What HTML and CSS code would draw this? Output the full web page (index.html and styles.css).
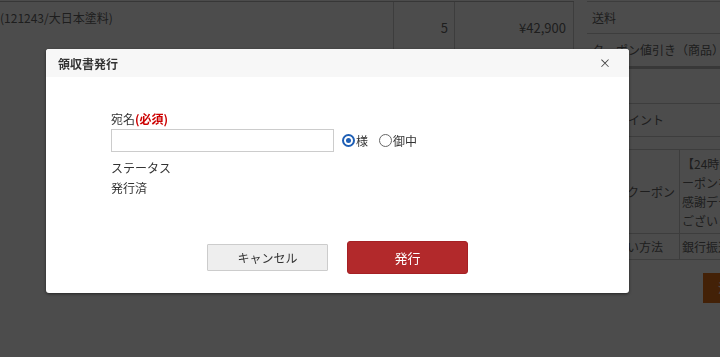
FILE: index.html
```html
<!DOCTYPE html>
<html lang="ja">
<head>
<meta charset="utf-8">
<title>領収書発行</title>
<link rel="stylesheet" href="styles.css">
</head>
<body>
<div class="page">
  <div class="items">
    <div class="item-row">
      <div class="c-name">(121243/大日本塗料)</div>
      <div class="c-qty">5</div>
      <div class="c-price">¥42,900</div>
    </div>
  </div>
  <div class="summary">
    <div class="sum-table">
      <div class="sum-row">送料</div>
      <div class="sum-row thick">クーポン値引き（商品）</div>
      <div class="sum-row">小計</div>
      <div class="sum-row">使用ポイント</div>
    </div>
    <div class="info-table">
      <div class="info-row tall">
        <div class="info-label">ご利用クーポン</div>
        <div class="info-value">【24時間限定】ク<br>ーポンをご利用いただき<br>感謝デーキャンペーン<br>ございます</div>
      </div>
      <div class="info-row">
        <div class="info-label">お支払い方法</div>
        <div class="info-value">銀行振込</div>
      </div>
    </div>
    <div class="order-wrap"><span class="order-btn">注文を確定する</span></div>
  </div>
</div>

<div class="overlay"></div>

<div class="modal">
  <div class="modal-head">
    <span class="modal-title">領収書発行</span>
    <span class="modal-close">×</span>
  </div>
  <div class="modal-body">
    <div class="field-label">宛名<span class="req">(必須)</span></div>
    <div class="field-row">
      <input class="name-input" type="text">
      <label class="radio"><span class="radio-dot checked"></span>様</label>
      <label class="radio"><span class="radio-dot"></span>御中</label>
    </div>
    <div class="status-label">ステータス</div>
    <div class="status-value">発行済</div>
    <div class="actions">
      <button class="btn-cancel">キャンセル</button>
      <button class="btn-issue">発行</button>
    </div>
  </div>
</div>
</body>
</html>
```

FILE: styles.css
```css
html, body {
  margin: 0;
  padding: 0;
  width: 720px;
  height: 357px;
  overflow: hidden;
  background: #ffffff;
  font-family: "Noto Sans CJK JP", "Noto Sans", sans-serif;
  color: #666666;
  font-size: 12px;
}

.page {
  display: flex;
  width: 760px;
  padding-top: 1px;
}

.items {
  width: 574px;
  flex: none;
}

.item-row {
  display: flex;
  height: 50px;
  border-top: 1px solid #b8b8b8;
}

.c-name {
  width: 394px;
  border-right: 1px solid #cccccc;
  line-height: 18px;
  padding-top: 7px;
  box-sizing: border-box;
}

.c-qty, .c-price {
  display: flex;
  align-items: center;
  justify-content: flex-end;
  font-size: 13px;
  box-sizing: border-box;
  padding-top: 1px;
}

.c-qty {
  width: 61px;
  border-right: 1px solid #cccccc;
  padding-right: 6px;
}

.c-price {
  width: 119px;
  border-right: 1px solid #cccccc;
  padding-right: 7px;
}

.summary {
  margin-left: 13px;
  width: 180px;
  flex: none;
}

.sum-table {
  border-top: 1px solid #cccccc;
}

.sum-row {
  height: 32px;
  line-height: 31px;
  padding-left: 5px;
  border-bottom: 1px solid #cccccc;
  white-space: nowrap;
  box-sizing: border-box;
}

.sum-row.thick {
  height: 35px;
  border-bottom: 3px solid #bbbbbb;
}

.sum-row:nth-child(3) {
  height: 35px;
}

.sum-row:nth-child(4) {
  height: 33px;
}

.info-table {
  margin-top: 12px;
  border-top: 1px solid #cccccc;
}

.info-row {
  display: flex;
  border-bottom: 1px solid #cccccc;
  height: 26px;
  box-sizing: border-box;
}

.info-row.tall {
  height: 84px;
}

.info-label {
  width: 93px;
  flex: none;
  padding-left: 4px;
  box-sizing: border-box;
  border-right: 1px solid #cccccc;
  display: flex;
  align-items: center;
  white-space: nowrap;
  overflow: hidden;
}

.info-value {
  padding-left: 2px;
  display: flex;
  align-items: center;
  line-height: 19px;
  white-space: nowrap;
}

.order-wrap {
  display: flex;
  margin-top: 13px;
  width: 180px;
}

.order-btn {
  display: block;
  width: 64px;
  height: 30px;
  line-height: 30px;
  background: #e0701a;
  color: #ffffff;
  padding-left: 15px;
  white-space: nowrap;
  overflow: hidden;
  margin-left: 116px;
}

.overlay {
  position: fixed;
  inset: 0;
  background: rgba(0, 0, 0, 0.7);
}

.modal {
  position: absolute;
  left: 46px;
  top: 49px;
  width: 583px;
  height: 244px;
  background: #ffffff;
  border-radius: 3px;
  box-shadow: 0 1px 3px rgba(0, 0, 0, 0.5);
  overflow: hidden;
  color: #333333;
}

.modal-head {
  height: 28px;
  background: #f7f7f7;
  display: flex;
  align-items: center;
  justify-content: space-between;
  padding: 0 18px 0 12px;
}

.modal-title {
  font-weight: bold;
  font-size: 12px;
  color: #333333;
}

.modal-close {
  font-size: 12px;
  color: #444444;
  line-height: 1;
}

.modal-body {
  padding: 32px 65px 0;
}

.field-label {
  line-height: 20px;
}

.req {
  color: #cc0000;
  font-weight: bold;
}

.field-row {
  display: flex;
  align-items: center;
  height: 23px;
}

.name-input {
  width: 223px;
  height: 23px;
  box-sizing: border-box;
  border: 1px solid #cccccc;
  margin: 0 8px 0 0;
  padding: 0;
  border-radius: 0;
}

.radio {
  display: flex;
  align-items: center;
  margin-right: 11px;
  color: #333333;
}

.radio-dot {
  width: 13px;
  height: 13px;
  box-sizing: border-box;
  border: 1px solid #666666;
  border-radius: 50%;
  margin-right: 1px;
  position: relative;
}

.radio-dot.checked {
  border: 2px solid #1f5fb5;
}

.radio-dot.checked::after {
  content: "";
  position: absolute;
  left: 2px;
  top: 2px;
  width: 5px;
  height: 5px;
  border-radius: 50%;
  background: #1f5fb5;
}

.status-label {
  margin-top: 6px;
  line-height: 20px;
}

.status-value {
  line-height: 19px;
}

.actions {
  display: flex;
  justify-content: center;
  align-items: center;
  gap: 19px;
  margin-top: 44px;
  margin-left: -65px;
  margin-right: -65px;
}

.btn-cancel {
  width: 121px;
  height: 27px;
  background: #eeeeee;
  border: 1px solid #cccccc;
  border-radius: 1px;
  font-family: "Noto Sans CJK JP", sans-serif;
  font-size: 12px;
  color: #333333;
  padding: 0;
}

.btn-issue {
  width: 121px;
  height: 33px;
  background: #b2292b;
  border: 1px solid #a52024;
  border-radius: 3px;
  font-family: "Noto Sans CJK JP", sans-serif;
  font-size: 13px;
  color: #ffffff;
  padding: 0;
}
```
